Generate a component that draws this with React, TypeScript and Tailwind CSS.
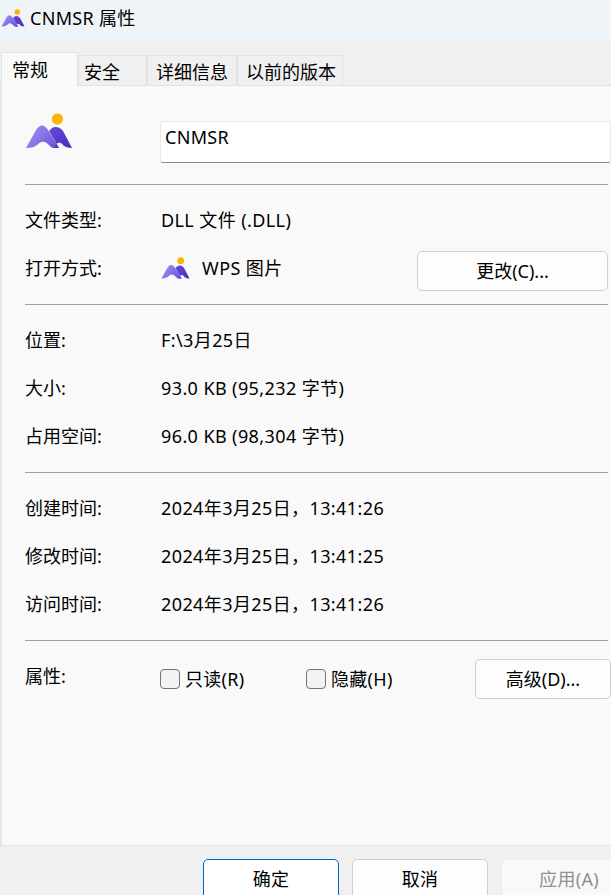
const font = "font-['Noto_Sans','Noto_Sans_CJK_SC',sans-serif]";

function AppIcon({ className, id }: { className: string; id: string }) {
  return (
    <svg viewBox="0 0 46 36" className={className}>
      <defs>
        <linearGradient id={`${id}-a`} x1="0" y1="0" x2="1" y2="0.6">
          <stop offset="0" stopColor="#a897f2" />
          <stop offset="1" stopColor="#7058de" />
        </linearGradient>
        <linearGradient id={`${id}-b`} x1="0" y1="0" x2="1" y2="0.8">
          <stop offset="0" stopColor="#6549d6" />
          <stop offset="1" stopColor="#4a2fc0" />
        </linearGradient>
      </defs>
      <circle cx="31.5" cy="6" r="5.6" fill="#fdb300" />
      <path
        d="M0 35 L10 17 Q16 8 22 17 L33 35 L27 35 Q25 35 23 32 Q17 25 11 32 Q8 35 0 35 Z"
        fill={`url(#${id}-a)`}
      />
      <path
        d="M23 18 L26 15 Q32 12 37 18 L46 35 Q41 35 38 33 Q33 26 29 33 Q28 35 27 35 L33 35 L23 18 Z"
        fill={`url(#${id}-b)`}
      />
    </svg>
  );
}

function Divider() {
  return <div className="mr-[3px] ml-[23px] h-px bg-[#a0a0a0]" />;
}

function InfoRow({ label, children }: { label: string; children: React.ReactNode }) {
  return (
    <div className="flex h-12 items-center pl-[23px]">
      <div className="w-[136px] shrink-0 tracking-normal">{label}</div>
      <div className="flex-1 tracking-[0.4px]">{children}</div>
    </div>
  );
}

function Tab({ label, className }: { label: string; className: string }) {
  return (
    <div className={`${className} flex h-[30px] items-center border border-b-0 border-[#e3e3e3] bg-[#f0f0f0] pt-[2px] tracking-normal`}>
      {label}
    </div>
  );
}

function Check({ label, className }: { label: string; className: string }) {
  return (
    <div className={`flex items-center gap-[5px] ${className}`}>
      <div className="size-5 rounded-[4px] border border-[#757575] bg-[#f3f3f3]" />
      <span>{label}</span>
    </div>
  );
}

function DialogButton({ label, className }: { label: string; className: string }) {
  return (
    <div className={`flex h-10 shrink-0 items-center justify-center rounded-[5px] border ${className}`}>{label}</div>
  );
}

export default function App() {
  return (
    <div className={`${font} flex h-[895px] w-[611px] flex-col overflow-hidden bg-[#f0f0f0] text-[18px] leading-6 tracking-[0.3px] text-black`}>
      <div className="flex h-10 shrink-0 items-center gap-[5px] bg-[#eff4f9] pb-1 pl-px">
        <AppIcon id="title" className="h-[18px] w-6" />
        <span>CNMSR 属性</span>
      </div>

      <div className="flex h-[46px] shrink-0 items-end border-b border-[#e3e3e3] pl-px">
        <div className="mb-[-1px] flex h-[34px] w-[77px] items-center rounded-t-[2px] border border-b-0 border-[#e3e3e3] bg-[#f9f9f9] pl-[10px] tracking-normal">
          常规
        </div>
        <Tab label="安全" className="w-[69px] pl-[5px]" />
        <Tab label="详细信息" className="w-[90px] pl-[8px]" />
        <Tab label="以前的版本" className="w-[106px] pl-[8px]" />
      </div>

      <div className="flex-1 border-l-2 border-[#e6e6e6] bg-[#f9f9f9]">
        <div className="flex h-[98px] items-start pt-[26px] pl-6">
          <AppIcon id="main" className="mt-px h-[36px] w-[46px] shrink-0" />
          <div className="mt-[9px] ml-[88px] flex h-[42px] flex-1 items-start rounded-[3px] border border-[#eaeaea] border-b-[#8a8a8a] bg-white pt-[3px] pl-[4px]">
            CNMSR
          </div>
        </div>
        <Divider />
        <div className="mt-[11px]">
          <InfoRow label="文件类型:">DLL 文件 (.DLL)</InfoRow>
          <InfoRow label="打开方式:">
            <div className="flex items-center">
              <AppIcon id="wps" className="h-[22px] w-[29px]" />
              <span className="ml-[12px]">WPS 图片</span>
              <DialogButton label="更改(C)..." className="mt-[6px] mr-[3px] ml-auto w-[191px] border-[#d0d0d0] bg-[#fdfdfd] tracking-normal" />
            </div>
          </InfoRow>
        </div>
        <div className="mt-3">
          <Divider />
        </div>
        <div className="mt-[11px]">
          <InfoRow label="位置:">F:\3月25日</InfoRow>
          <InfoRow label="大小:">93.0 KB (95,232 字节)</InfoRow>
          <InfoRow label="占用空间:">96.0 KB (98,304 字节)</InfoRow>
        </div>
        <div className="mt-3">
          <Divider />
        </div>
        <div className="mt-[11px]">
          <InfoRow label="创建时间:">2024年3月25日，13:41:26</InfoRow>
          <InfoRow label="修改时间:">2024年3月25日，13:41:25</InfoRow>
          <InfoRow label="访问时间:">2024年3月25日，13:41:26</InfoRow>
        </div>
        <div className="mt-3">
          <Divider />
        </div>
        <div className="mt-[18px] flex h-10 items-center pl-[23px]">
          <div className="mb-[6px] w-[135px] shrink-0 tracking-normal">属性:</div>
          <Check label="只读(R)" className="w-[146px]" />
          <Check label="隐藏(H)" className="w-[169px]" />
          <DialogButton label="高级(D)..." className="w-[136px] border-[#d0d0d0] bg-[#fdfdfd] tracking-normal" />
        </div>
      </div>

      <div className="flex h-[50px] shrink-0 gap-[13px] border-t border-[#e3e3e3] pt-[13px] pl-[203px]">
        <DialogButton label="确定" className="w-[136px] border-[#0067c0] bg-white" />
        <DialogButton label="取消" className="w-[136px] border-[#d0d0d0] bg-[#fdfdfd]" />
        <DialogButton label="应用(A)" className="w-[136px] border-[#ececec] bg-[#f9f9f9] text-[#8f8f8f]" />
      </div>
    </div>
  );
}
